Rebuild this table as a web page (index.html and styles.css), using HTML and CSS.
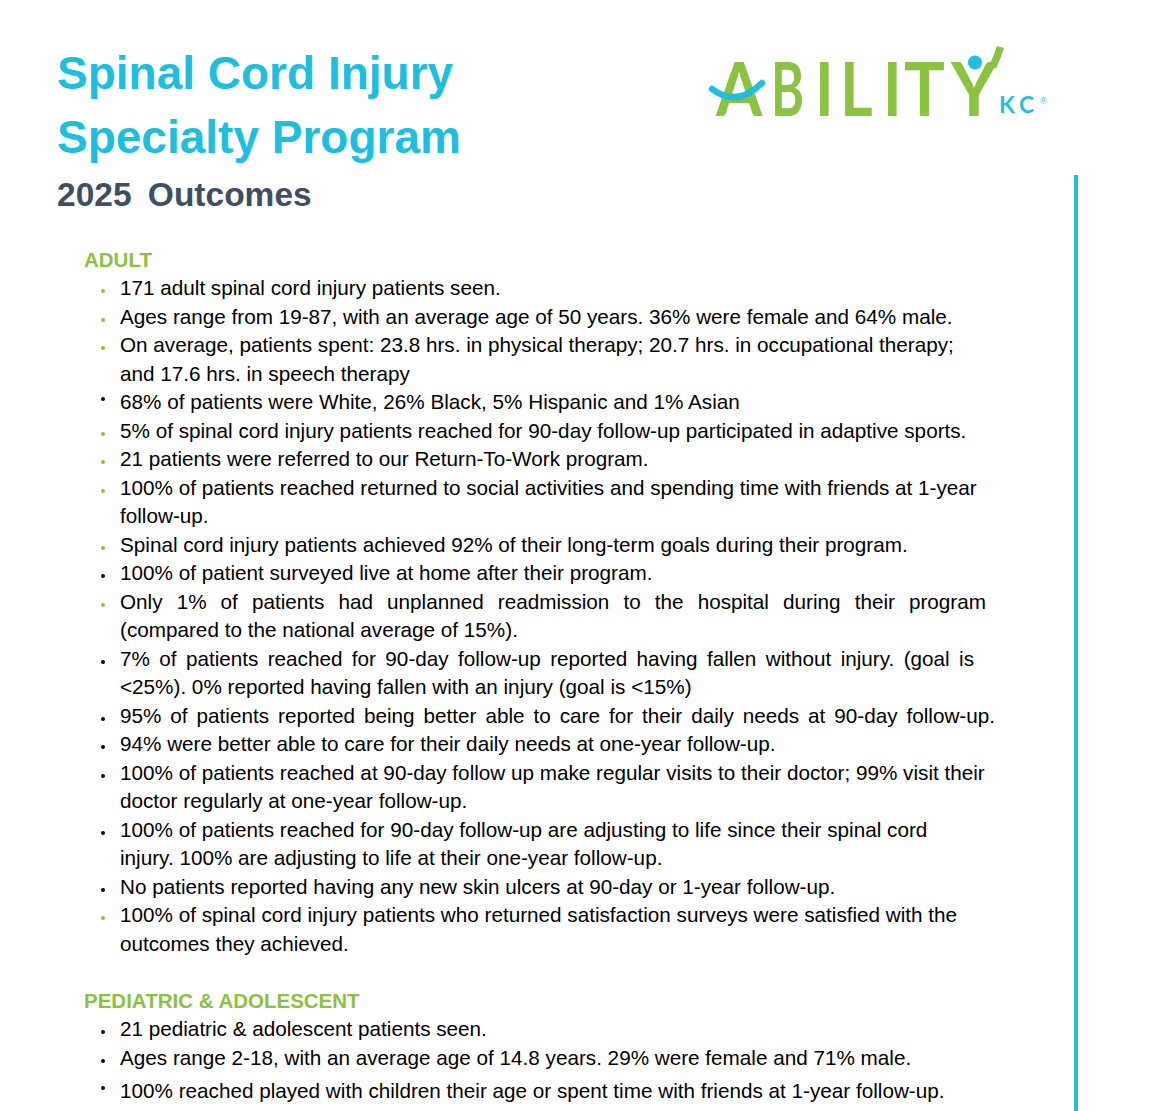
FILE: index.html
```html
<!DOCTYPE html>
<html lang="en">
<head>
<meta charset="utf-8">
<title>Spinal Cord Injury Specialty Program – 2025 Outcomes</title>
<link rel="stylesheet" href="styles.css">
</head>
<body>
<div class="page">
  <div class="main">
    <header class="header">
      <div class="titles">
        <h1 class="title">Spinal Cord Injury<br>Specialty Program</h1>
        <h2 class="subtitle">2025 Outcomes</h2>
      </div>
      <svg class="logo" viewBox="0 0 360 90" xmlns="http://www.w3.org/2000/svg" aria-label="Ability KC">
        <g class="logo-letters">
          <text transform="translate(16 76) scale(0.9 1)">A</text>
          <text transform="translate(71 76) scale(0.68 1)">B</text>
          <text transform="translate(115 76) scale(0.85 1)">I</text>
          <text transform="translate(140 76) scale(0.85 1)">L</text>
          <text transform="translate(183 76) scale(0.85 1)">I</text>
          <text transform="translate(204 76) scale(0.92 1)">T</text>
          <text transform="translate(251 76) scale(0.96 1)">Y</text>
        </g>
        <path class="arm" d="M292.5 27 Q297.5 17 300.5 7"/>
        <path class="swoosh" d="M12 49 Q37 68 62 43"/>
        <circle class="head" cx="275" cy="22.5" r="7"/>
        <text class="kc" x="299" y="73">KC</text>
        <text class="reg" x="340" y="64">®</text>
      </svg>
    </header>

    <section class="section adult">
      <h3 class="sec-head">ADULT</h3>
      <ul class="items">
        <li class="item"><span class="dot green"></span><div class="txt">171 adult spinal cord injury patients seen.</div></li>
        <li class="item"><span class="dot green"></span><div class="txt">Ages range from 19-87, with an average age of 50 years. 36% were female and 64% male.</div></li>
        <li class="item"><span class="dot green"></span><div class="txt">On average, patients spent: 23.8 hrs. in physical therapy; 20.7 hrs. in occupational therapy;<br>and 17.6 hrs. in speech therapy</div></li>
        <li class="item"><span class="dot black hi"></span><div class="txt">68% of patients were White, 26% Black, 5% Hispanic and 1% Asian</div></li>
        <li class="item"><span class="dot green"></span><div class="txt">5% of spinal cord injury patients reached for 90-day follow-up participated in adaptive sports.</div></li>
        <li class="item"><span class="dot green"></span><div class="txt">21 patients were referred to our Return-To-Work program.</div></li>
        <li class="item"><span class="dot green"></span><div class="txt">100% of patients reached returned to social activities and spending time with friends at 1-year<br>follow-up.</div></li>
        <li class="item"><span class="dot green"></span><div class="txt">Spinal cord injury patients achieved 92% of their long-term goals during their program.</div></li>
        <li class="item"><span class="dot black"></span><div class="txt">100% of patient surveyed live at home after their program.</div></li>
        <li class="item"><span class="dot green"></span><div class="txt"><span class="jline just-readmit">Only 1% of patients had unplanned readmission to the hospital during their program</span>(compared to the national average of 15%).</div></li>
        <li class="item"><span class="dot black"></span><div class="txt"><span class="jline just-falls">7% of patients reached for 90-day follow-up reported having fallen without injury. (goal is</span>&lt;25%). 0% reported having fallen with an injury (goal is &lt;15%)</div></li>
        <li class="item"><span class="dot black"></span><div class="txt"><span class="jline just-care">95% of patients reported being better able to care for their daily needs at 90-day follow-up.</span></div></li>
        <li class="item"><span class="dot black"></span><div class="txt">94% were better able to care for their daily needs at one-year follow-up.</div></li>
        <li class="item"><span class="dot black"></span><div class="txt">100% of patients reached at 90-day follow up make regular visits to their doctor; 99% visit their<br>doctor regularly at one-year follow-up.</div></li>
        <li class="item"><span class="dot black"></span><div class="txt">100% of patients reached for 90-day follow-up are adjusting to life since their spinal cord<br>injury. 100% are adjusting to life at their one-year follow-up.</div></li>
        <li class="item"><span class="dot black"></span><div class="txt">No patients reported having any new skin ulcers at 90-day or 1-year follow-up.</div></li>
        <li class="item"><span class="dot green"></span><div class="txt">100% of spinal cord injury patients who returned satisfaction surveys were satisfied with the<br>outcomes they achieved.</div></li>
      </ul>
    </section>

    <section class="section peds">
      <h3 class="sec-head">PEDIATRIC &amp; ADOLESCENT</h3>
      <ul class="items">
        <li class="item"><span class="dot black"></span><div class="txt">21 pediatric &amp; adolescent patients seen.</div></li>
        <li class="item"><span class="dot black"></span><div class="txt">Ages range 2-18, with an average age of 14.8 years. 29% were female and 71% male.</div></li>
        <li class="item item-spaced"><span class="dot black hi"></span><div class="txt">100% reached played with children their age or spent time with friends at 1-year follow-up.</div></li>
      </ul>
    </section>
  </div>
  <div class="rule"></div>
</div>
</body>
</html>
```
FILE: styles.css
```css
html, body {
  margin: 0;
  padding: 0;
  background: #ffffff;
}

body {
  font-family: "Liberation Sans", Arial, Helvetica, sans-serif;
  color: #000000;
}

.page {
  display: flex;
  width: 1159px;
  height: 1111px;
  overflow: hidden;
}

.main {
  width: 1074px;
  flex: none;
}

.rule {
  width: 4px;
  flex: none;
  margin-top: 175px;
  background: #1fbfdd;
}

/* Header */
.header {
  display: flex;
  padding-left: 57px;
}

.titles {
  width: 643px;
  flex: none;
  padding-top: 40.5px;
}

.title {
  margin: 0;
  font-size: 46px;
  line-height: 64.5px;
  font-weight: 700;
  color: #20bedd;
}

.subtitle {
  margin: 5px 0 0;
  font-size: 33.5px;
  line-height: 40px;
  font-weight: 700;
  color: #3e4f62;
  word-spacing: 7px;
}

.logo {
  width: 360px;
  height: 90px;
  margin-top: 40px;
  flex: none;
  overflow: visible;
}

.logo-letters {
  font-family: Lato, "Open Sans", sans-serif;
  font-weight: 700;
  font-size: 74px;
  fill: #8cc242;
}

.arm {
  fill: none;
  stroke: #8cc242;
  stroke-width: 7.5;
}

.swoosh {
  fill: none;
  stroke: #1fbfdd;
  stroke-width: 6.5;
  stroke-linecap: round;
}

.head {
  fill: #1fbfdd;
}

.kc {
  font-family: Lato, "Open Sans", sans-serif;
  font-weight: 700;
  font-size: 23px;
  letter-spacing: 5px;
  fill: #1fbfdd;
}

.reg {
  font-family: "Liberation Sans", Arial, sans-serif;
  font-size: 9px;
  fill: #1fbfdd;
}

/* Sections */
.section {
  padding-left: 84px;
}

.adult {
  margin-top: 31px;
}

.peds {
  margin-top: 28.5px;
}

.sec-head {
  margin: 0;
  font-size: 20.5px;
  line-height: 28.5px;
  font-weight: 700;
  color: #8cc13f;
}

.items {
  list-style: none;
  margin: 0;
  padding: 0;
}

.item {
  display: grid;
  grid-template-columns: 36px 1fr;
  font-size: 20.7px;
  line-height: 28.5px;
}

.item-spaced {
  margin-top: 4.5px;
}

.dot {
  width: 4px;
  height: 4px;
  border-radius: 50%;
  margin: 15px 0 0 17px;
}

.dot.green {
  background: #8cc13f;
}

.dot.black {
  background: #000000;
}

.dot.hi {
  margin-top: 9px;
}

.jline {
  display: block;
  text-align: justify;
  text-align-last: justify;
}

.just-readmit {
  width: 866px;
}

.just-falls {
  width: 854px;
}

.just-care {
  width: 875px;
}
```
